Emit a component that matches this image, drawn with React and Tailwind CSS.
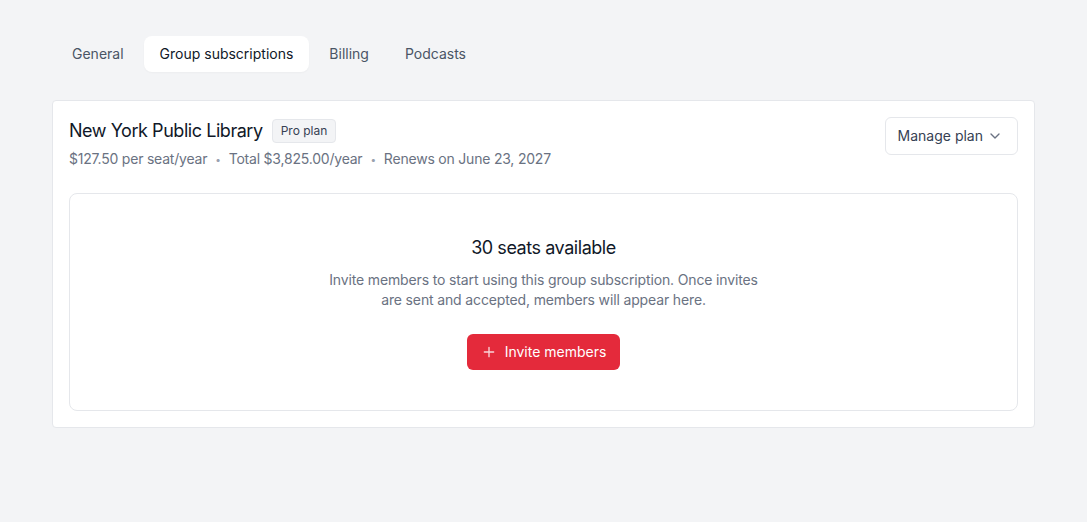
import React, { useState } from 'react';

const tabs = ['General', 'Group subscriptions', 'Billing', 'Podcasts'];

const ChevronDown = () => (
  <svg className="h-4 w-4 text-gray-500" viewBox="0 0 24 24" fill="none" stroke="currentColor" strokeWidth="2" strokeLinecap="round" strokeLinejoin="round">
    <path d="m6 9 6 6 6-6" />
  </svg>
);

const Plus = () => (
  <svg className="h-4 w-4 text-white/80" viewBox="0 0 24 24" fill="none" stroke="currentColor" strokeWidth="2" strokeLinecap="round">
    <path d="M12 5v14M5 12h14" />
  </svg>
);

const App = () => {
  const [activeTab, setActiveTab] = useState('Group subscriptions');

  return (
    <div className="min-h-screen bg-[#f3f4f6] px-[52px] pt-8 font-['Inter',sans-serif] text-gray-900">
      <div className="w-[983px]">
        {/* settings tabs */}
        <nav className="flex gap-1 p-1">
          {tabs.map((tab) => (
            <button
              key={tab}
              onClick={() => setActiveTab(tab)}
              className={
                tab === activeTab
                  ? 'rounded-lg bg-white px-4 py-2 text-sm leading-5 text-gray-900 shadow-[0_1px_2px_rgba(0,0,0,0.03)]'
                  : 'rounded-lg px-4 py-2 text-sm leading-5 text-gray-600'
              }
            >
              {tab}
            </button>
          ))}
        </nav>

        <div className="mt-6 rounded border border-gray-200 bg-white p-4">
          <div className="flex items-start justify-between">
            <div>
              <div className="flex items-center gap-2">
                <h2 className="text-lg leading-7 font-normal tracking-tight">New York Public Library</h2>
                <span className="ml-px rounded border border-gray-200 bg-gray-100 px-2 py-[3px] text-xs leading-4 text-gray-700">
                  Pro plan
                </span>
              </div>
              <p className="mt-1 flex items-center gap-2 text-sm leading-5 tracking-[-0.015em] text-gray-500">
                <span>$127.50 per seat/year</span>
                <span className="text-[10px] text-gray-400">•</span>
                <span>Total $3,825.00/year</span>
                <span className="text-[10px] text-gray-400">•</span>
                <span>Renews on June 23, 2027</span>
              </p>
            </div>
            <button className="flex h-[38px] items-center gap-1 rounded-md border border-gray-200 bg-white pr-[14px] pl-3 text-sm text-gray-700">
              Manage plan
              <ChevronDown />
            </button>
          </div>

          <div className="mt-6 flex flex-col items-center rounded-lg border border-gray-200 py-10 text-center">
            <h3 className="text-lg leading-7 font-normal tracking-tight">30 seats available</h3>
            <p className="mt-2 max-w-[440px] text-sm leading-5 tracking-[-0.01em] text-gray-500">
              Invite members to start using this group subscription. Once invites are sent and accepted, members will appear here.
            </p>
            <button className="mt-6 flex h-9 items-center gap-2 rounded-md bg-[#e42a3b] px-[14px] text-sm text-white">
              <Plus />
              Invite members
            </button>
          </div>
        </div>
      </div>
    </div>
  );
};

export default App;
